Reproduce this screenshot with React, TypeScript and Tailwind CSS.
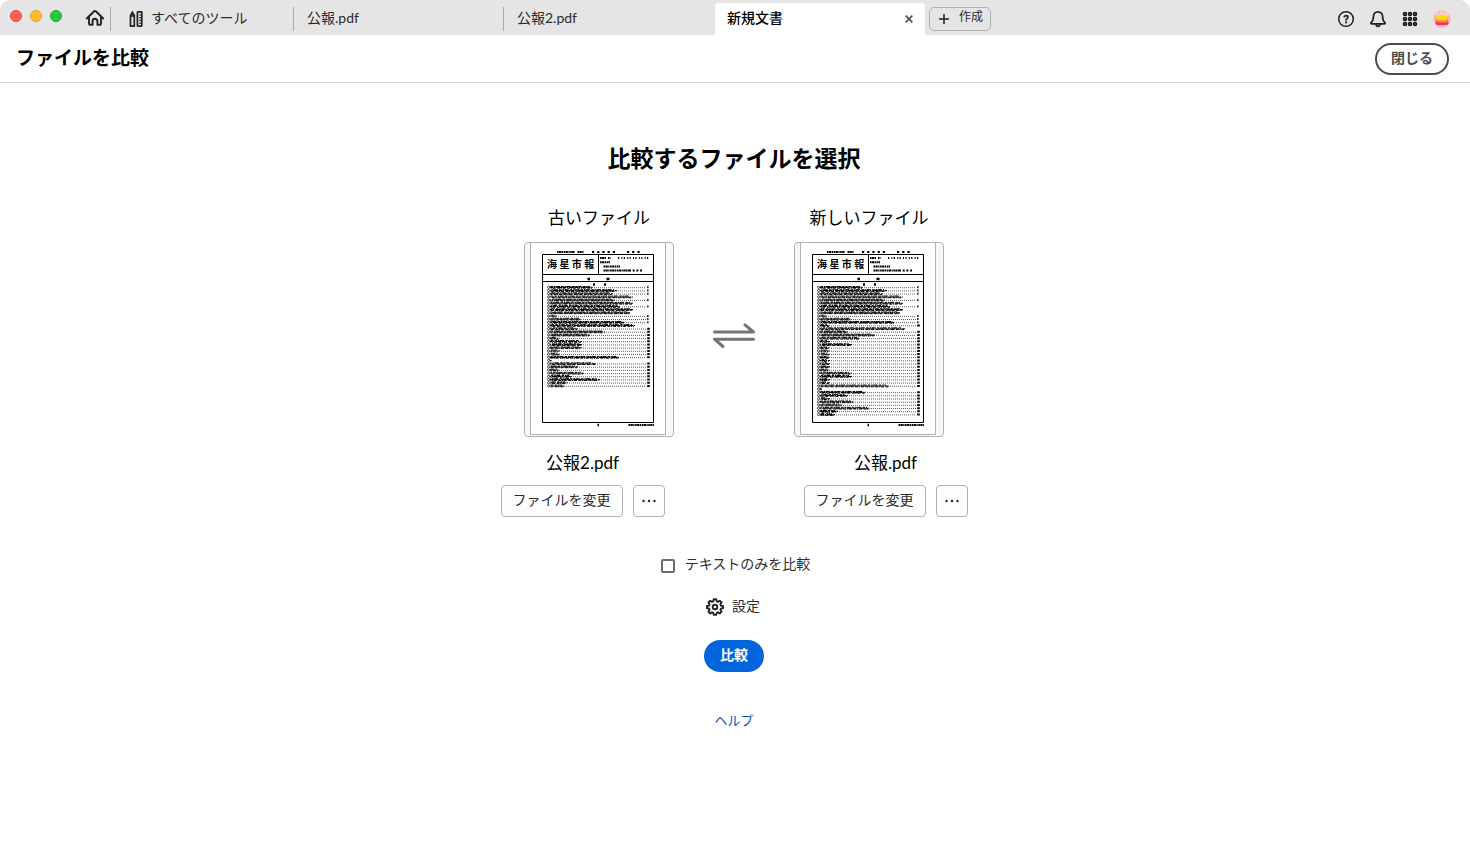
import React, { useState } from 'react';

type TocRow = [end: number, leader: boolean];

const commonTop: TocRow[] = [
  [69, true], [93, true], [89, true], [109, false], [91, true], [109, false],
  [97, true], [109, false], [106, false], [33, true], [58, true], [101, true],
];

const commonBottom: TocRow[] = [
  [95, true], [28, false], [72, true], [54, true], [36, true], [60, true],
  [48, true], [76, true], [44, true], [41, true],
];

const oldRows: TocRow[] = [
  ...commonTop,
  [111, false], [54, true], [81, true], [66, true], [36, true], [58, true],
  [58, true], [58, true], [36, true], [36, true],
  ...commonBottom,
];

const newRows: TocRow[] = [
  ...commonTop,
  [36, true], [111, false], [54, true], [81, true], [66, true], [36, true],
  [58, true], [36, true], [36, true], [36, true], [36, true], [36, true],
  [36, true], [36, true], [36, true], [58, true], [58, true], [36, true], [36, true],
  ...commonBottom,
];

const HomeIcon = () => (
  <svg width="20" height="20" viewBox="0 0 20 20" fill="none" stroke="#222" strokeWidth="1.9" strokeLinejoin="round" strokeLinecap="round">
    <path d="M1.800 10.500 9.200 3.300a1.200 1.200 0 0 1 1.600 0L18.200 10.500M4 9v6.800a1 1 0 0 0 1 1h2.600v-3.600a2.400 2.400 0 0 1 4.800 0v3.600H15a1 1 0 0 0 1-1V9" />
  </svg>
);

const ToolsIcon = () => (
  <svg width="14" height="18" viewBox="0 0 14 18" fill="none" stroke="#222" strokeWidth="1.7" strokeLinejoin="round">
    <path d="M1.500 5.500 3.400 2.500l1.900 3v10.700H1.500zM1.500 6h3.800M3.400 1.200v2.300" />
    <rect x="8.400" y="1.800" width="4.400" height="14.400" rx=".6" />
    <path d="M10.300 5h2.500M10.300 7.700h2.500M10.300 10.400h2.500M10.300 13.100h2.500" strokeWidth="1.200" />
  </svg>
);

const HelpIcon = () => (
  <svg width="18" height="18" viewBox="0 0 18 18" fill="none" stroke="#222" strokeWidth="1.5" strokeLinecap="round">
    <circle cx="9" cy="9" r="7.300" />
    <path d="M7.300 6.700c.3-.7 1-1 1.800-1 1 0 1.800.5 1.800 1.500 0 1.300-1.800 1.400-1.800 2.800" strokeWidth="1.700" />
    <circle cx="9.100" cy="12.400" r=".4" />
  </svg>
);

const BellIcon = () => (
  <svg width="18" height="18" viewBox="0 0 18 18" fill="none" stroke="#222" strokeWidth="1.7" strokeLinejoin="round">
    <path d="M9 1.800c-2.700 0-4.600 2-4.600 4.700 0 3.600-.8 4.900-2.300 6-.5.5-.4 1.300.4 1.300h13c.8 0 .9-.8.4-1.300-1.500-1.100-2.300-2.400-2.300-6C13.600 3.800 11.700 1.800 9 1.800z" />
    <path d="M7 14.200c.1 1.300.9 2.200 2 2.200s1.900-.9 2-2.200" />
  </svg>
);

const AppsIcon = () => (
  <svg width="16" height="16" viewBox="0 0 16 16" fill="#777" stroke="#151515" strokeWidth="1.500">
    {[3, 8, 13].map((y) =>
      [3, 8, 13].map((x) => <circle key={`${x}-${y}`} cx={x} cy={y} r="1.500" />)
    )}
  </svg>
);

const Avatar = () => (
  <svg width="18" height="18" viewBox="0 0 18 18">
    <circle cx="9" cy="9" r="8.800" fill="#fcb5b5" />
    <g fill="none" stroke="#fde0dc" strokeWidth="1">
      <circle cx="4.500" cy="4" r="1.500" />
      <circle cx="9" cy="3" r="1.600" />
      <circle cx="13.500" cy="4" r="1.500" />
    </g>
    <path d="M1.800 12h14.400a7.500 7.500 0 0 1-2 3H3.800a7.500 7.500 0 0 1-2-3z" fill="#e9328f" />
    <rect x="2.800" y="7" width="12.400" height="5.500" rx="2" fill="#f88a12" />
    <rect x="3.500" y="5.500" width="11" height="4.800" rx="2" fill="#ffd91f" />
  </svg>
);

const GearIcon = () => (
  <svg width="18" height="18" viewBox="0 0 18 18" fill="none" stroke="#222" strokeWidth="1.900" strokeLinejoin="round">
    <path d="M7.700 1.300h2.600l.4 2.100 1.300.5 1.800-1.200 1.800 1.800-1.200 1.800.5 1.300 2.100.4v2.200l-2.100.4-.5 1.300 1.200 1.800-1.800 1.800-1.800-1.200-1.300.5-.4 2.100H7.700l-.4-2.100-1.300-.5-1.800 1.200-1.800-1.800 1.200-1.800-.5-1.300-2.100-.4V8l2.100-.4.500-1.300-1.200-1.800 1.800-1.800L6 3.900l1.300-.5z" />
    <circle cx="9" cy="9" r="2.300" />
  </svg>
);

const SwapIcon = () => (
  <svg width="44" height="26" viewBox="0 0 44 26" fill="none" stroke="#747474" strokeWidth="3" strokeLinecap="round" strokeLinejoin="round">
    <path d="M2.500 9H41.500L33 1.800" />
    <path d="M41.500 16.200H2.500L11 23.500" />
  </svg>
);

const Thumbnail: React.FC<{ rows: TocRow[]; label: string }> = ({ rows, label }) => (
  <div className="w-[150px] overflow-hidden rounded border border-[#b1b1b1] bg-[#f8f8f8]">
    <svg width="148" height="193" viewBox="1 1 148 193" role="img" aria-label={label} className="block">
      <rect x="6.500" y="-2" width="135" height="194.500" fill="#fff" stroke="#b1b1b1" />
      <g fill="none" stroke="#000">
        <g strokeWidth="1.900" strokeDasharray="1.600 .4 2.300 .5 1.200 .6">
          <path d="M33 10h18M53.500 10H60" />
          <path d="M76 16h6M84 16h2.500M76 20.300h10M79.500 24.500H96M79.500 28.500H105" />
          <path d="M104.500 183H130" />
        </g>
        <g strokeWidth="2.200" strokeDasharray="2.200 3">
          <path d="M68 10h24M103 10h13" />
        </g>
        <path d="M94 16h32" strokeWidth="2" strokeDasharray="1.200 2.200 1 1.400" />
        <path d="M105 28.500h13" strokeWidth="2" strokeDasharray="2 1.700" />
        <path d="M63.500 37h2.500M82.500 37h3M69 42.500h2M80 42.500h2M73.500 183h1.500" strokeWidth="2.500" />
        <path d="M18.500 12.500h111v168h-111zM18.500 32.500h111M18.500 39.500h111M74.500 12.500v20" />
      </g>
      <text x="23" y="26" fontSize="10" className="fill-black font-bold">海 星 市 報</text>
      {rows.map(([end, leader], i) => {
        const y = 45.3 + i * 3.18;
        return (
          <g key={i} fill="none" stroke="#000">
            <circle cx="24.600" cy={y} r="1.100" strokeWidth=".7" />
            <path d={`M26.500 ${y - 0.8}H${end - 3}`} strokeWidth="1" strokeDasharray="2.400 .9 1.600 .5 4.100 1.300" strokeDashoffset={i * 2.3} />
            <path d={`M26 ${y + 0.1}H${end}`} strokeWidth="1.100" strokeDasharray="3.400 .6 1.500 .9 5.600 .4" strokeDashoffset={i * 3.7} />
            <path d={`M26.500 ${y + 0.9}H${end - 1}`} strokeWidth="1" strokeDasharray="1.200 .8 3.100 1.500 2.800 .7" strokeDashoffset={i * 1.7} />
            {leader && (
              <>
                <path d={`M${end + 1} ${y + 0.4}H122`} stroke="#333" strokeWidth=".8" strokeDasharray="1 1" />
                <path d={`M123.200 ${y}h${i < 12 ? 1.3 : 2.6}`} strokeWidth="2" />
              </>
            )}
          </g>
        );
      })}
    </svg>
  </div>
);

const FileActions: React.FC<{ name: string }> = ({ name }) => (
  <div className="flex w-[164px] flex-col items-center">
    <p className="text-[17px] leading-6 text-black">{name}</p>
    <div className="mt-2.5 flex w-full justify-between">
      <button className="h-8 w-[122px] rounded border border-[#b1b1b1] bg-[#fdfdfd] pb-0.5 text-sm text-[#2c2c2c]">
        ファイルを変更
      </button>
      <button aria-label={`${name}のその他のオプション`} className="flex size-8 items-center justify-center rounded border border-[#b1b1b1] bg-[#fdfdfd]">
        <svg width="16" height="4" viewBox="0 0 16 4" fill="#222">
          <circle cx="2.500" cy="2" r="1.200" />
          <circle cx="8" cy="2" r="1.200" />
          <circle cx="13.500" cy="2" r="1.200" />
        </svg>
      </button>
    </div>
  </div>
);

const TabBar = () => (
  <header className="flex h-[35px] rounded-t-[10px] bg-[#e5e5e5] text-sm text-[#2c2c2c]">
    <div className="flex w-[110px] shrink-0 items-center justify-between pr-[5px] pl-2.5">
      <div className="flex gap-2 pb-1">
        <span className="size-3 rounded-full border border-[#e0443e] bg-[#ff5f57]" />
        <span className="size-3 rounded-full border border-[#dea123] bg-[#febc2e]" />
        <span className="size-3 rounded-full border border-[#1aab29] bg-[#28c840]" />
      </div>
      <button aria-label="ホーム"><HomeIcon /></button>
    </div>
    <nav className="flex items-end">
      <button className="mb-1 flex h-6 w-[183px] items-center gap-2 border-l border-[#aaa] pl-[18px]">
        <ToolsIcon />
        <span className="pb-0.5">すべてのツール</span>
      </button>
      <button className="mb-1 h-6 w-[210px] border-l border-[#aaa] pb-0.5 pl-[13px] text-left">公報.pdf</button>
      <button className="mb-1 h-6 w-[210px] border-l border-[#aaa] pb-0.5 pl-[13px] text-left">公報2.pdf</button>
      <div className="ml-0.5 flex h-8 w-[210px] items-center justify-between rounded-t bg-white px-3 font-medium text-black">
        <span className="pb-0.5">新規文書</span>
        <button aria-label="タブを閉じる">
          <svg width="8" height="8" viewBox="0 0 8 8" stroke="#5a5a5a" strokeWidth="1.900">
            <path d="M.6.6 7.400 7.400M7.400.6.6 7.400" />
          </svg>
        </button>
      </div>
    </nav>
    <button className="mt-[7px] ml-1 flex h-6 w-[62px] items-center gap-2.5 rounded-[5px] border border-[#b1b1b1] pl-[9px] text-xs">
      <svg width="10" height="10" viewBox="0 0 10 10" stroke="#222" strokeWidth="1.500">
        <path d="M5 0v10M0 5h10" />
      </svg>
      <span className="pb-1">作成</span>
    </button>
    <div className="ml-auto flex items-center gap-[14px] pt-0.5 pr-[19px]">
      <button aria-label="ヘルプセンター"><HelpIcon /></button>
      <button aria-label="通知"><BellIcon /></button>
      <button aria-label="アプリ" className="px-px"><AppsIcon /></button>
      <button aria-label="アカウント"><Avatar /></button>
    </div>
  </header>
);

export default function App() {
  const [textOnly, setTextOnly] = useState(false);

  return (
    <div lang="ja" className="min-h-screen bg-white font-[Lato,'Noto_Sans_CJK_JP',sans-serif]">
      <TabBar />
      <div className="flex h-12 items-center justify-between border-b border-[#d4d4d4] pr-[21px] pl-4">
        <h1 className="pb-0.5 text-[19px] leading-6 font-bold text-black">ファイルを比較</h1>
        <button className="h-8 rounded-full border-2 border-[#4b4b4b] px-3.5 pb-0.5 text-sm font-bold text-[#4b4b4b]">
          閉じる
        </button>
      </div>

      <main className="flex flex-col items-center pt-[59px] pr-0.5 pb-12 text-sm text-[#2c2c2c]">
        <h2 className="text-[23px] leading-8 font-bold text-black">比較するファイルを選択</h2>

        <div className="mt-8 flex items-end gap-[38px]">
          <section className="flex flex-col items-center gap-3">
            <h3 className="text-[17px] leading-6 text-black">古いファイル</h3>
            <Thumbnail rows={oldRows} label="公報2.pdf" />
          </section>
          <button aria-label="ファイルを入れ替え" className="mb-[88px]"><SwapIcon /></button>
          <section className="flex flex-col items-center gap-3">
            <h3 className="text-[17px] leading-6 text-black">新しいファイル</h3>
            <Thumbnail rows={newRows} label="公報.pdf" />
          </section>
        </div>

        <div className="mt-[14px] flex gap-[139px]">
          <FileActions name="公報2.pdf" />
          <FileActions name="公報.pdf" />
        </div>

        <label className="mt-9 flex items-center gap-2.5 pl-[3px] leading-6">
          <input
            type="checkbox"
            checked={textOnly}
            onChange={(e) => setTextOnly(e.target.checked)}
            className="mt-0.5 size-3.5 appearance-none rounded-xs border-2 border-[#6d6d6d] bg-white checked:bg-[#6d6d6d]"
          />
          <span className="pb-0.5 leading-[22px]">テキストのみを比較</span>
        </label>

        <button className="mt-[18px] flex items-center gap-2 pr-0.5">
          <GearIcon />
          <span className="pb-0.5 leading-[22px]">設定</span>
        </button>

        <button className="mt-[21px] h-8 rounded-full bg-[#0265dc] px-4 pb-0.5 font-bold text-white">比較</button>

        <a href="#help" className="mt-[38px] text-[13px] leading-5 text-[#0054b6]">ヘルプ</a>
      </main>
    </div>
  );
}
